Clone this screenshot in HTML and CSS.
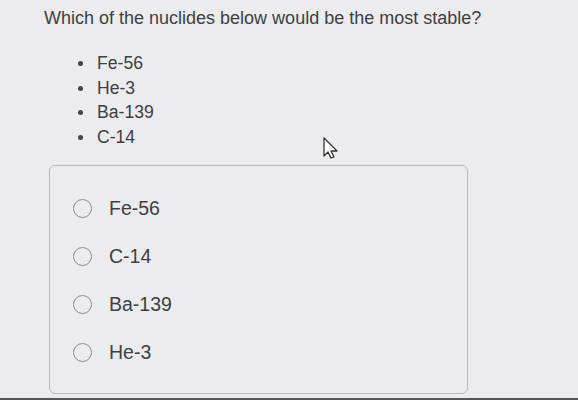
FILE: index.html
```html
<!DOCTYPE html>
<html lang="en">
<head>
    <meta charset="UTF-8">
    <title>Question</title>
    <link rel="stylesheet" href="styles.css">
</head>
<body>
    <div class="question">
        <p class="prompt">Which of the nuclides below would be the most stable?</p>
        <ul class="nuclides">
            <li>Fe-56</li>
            <li>He-3</li>
            <li>Ba-139</li>
            <li>C-14</li>
        </ul>
        <div class="choices">
            <label class="choice"><span class="radio"></span>Fe-56</label>
            <label class="choice"><span class="radio"></span>C-14</label>
            <label class="choice"><span class="radio"></span>Ba-139</label>
            <label class="choice"><span class="radio"></span>He-3</label>
        </div>
    </div>
    <!-- mouse pointer captured in the recording -->
    <svg class="cursor" width="20" height="24" viewBox="0 0 20 24">
        <path d="M2 2 L2 20 L6 16 L9 22 L12 21 L9 15 L15 15 Z" fill="#fff" stroke="#333" stroke-width="1.3" stroke-linejoin="round"/>
    </svg>
    <div class="bottom-bar"></div>
</body>
</html>
```

FILE: styles.css
```css
/* General */
body {
    margin: 0;
    height: 400px;
    overflow: hidden;
    background-color: #ecebee;
    font-family: "Liberation Sans", Arial, sans-serif;
    color: #404042;
    position: relative;
}
.question {
    padding-left: 44px;
}
.prompt {
    margin: 0;
    padding-top: 5px;
    font-size: 18px;
    line-height: 26px;
}
/* Bullet list */
.nuclides {
    list-style: none;
    margin: 20px 0 0 0;
    padding: 0 0 0 53px;
    font-size: 17.6px;
    line-height: 24.5px;
}
.nuclides li {
    position: relative;
}
.nuclides li::before {
    content: "";
    position: absolute;
    left: -19px;
    top: 10px;
    width: 5px;
    height: 5px;
    border-radius: 50%;
    background-color: #444;
}
/* Answer box */
.choices {
    margin: 16px 0 0 5px;
    width: 419px;
    height: 229px;
    border: 1.5px solid #b8b8bb;
    border-radius: 6px;
    padding-top: 18px;
    box-sizing: border-box;
    display: flex;
    flex-direction: column;
}
.choice {
    display: flex;
    align-items: center;
    height: 48px;
    padding-left: 23px;
    font-size: 19.5px;
}
.radio {
    width: 19px;
    height: 19px;
    border: 1.6px solid #8c8c8e;
    border-radius: 50%;
    box-sizing: border-box;
    margin-right: 17px;
}
.cursor {
    position: absolute;
    left: 322px;
    top: 136px;
}
.bottom-bar {
    position: absolute;
    left: 0;
    right: 0;
    bottom: 0;
    height: 2px;
    background-color: #555;
}
```
